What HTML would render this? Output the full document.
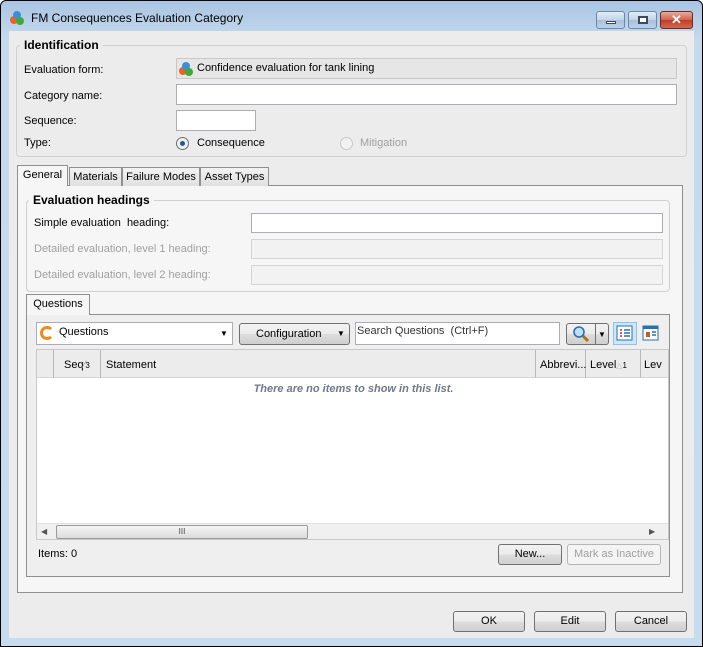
<!DOCTYPE html><html><head><style>
*{box-sizing:border-box;margin:0;padding:0}
body{width:703px;height:647px;overflow:hidden;background:#fff;font-family:"Liberation Sans",sans-serif;font-size:11px;color:#000;position:relative}
.a{position:absolute}
.t{position:absolute;white-space:nowrap;line-height:13px}
.inp{position:absolute;background:#fff;border:1px solid #abadb3}
.dis{background:#f2f2f2;border-color:#d4d4d4}
.btn{position:absolute;border:1px solid #707070;border-radius:3px;background:linear-gradient(#f2f2f2,#ebebeb 50%,#dddddd 51%,#cfcfcf);text-align:center;line-height:19px}
.grp{position:absolute;border:1px solid #d0d0d0;border-radius:4px}
.gt{position:absolute;font-weight:bold;background:#ececec;padding:0 4px;font-size:12px;line-height:14px}
.gray{color:#a0a0a0}
.tab{position:absolute;border:1px solid #8e8f8f;border-bottom:none;background:linear-gradient(#f3f3f3,#e0e0e0);text-align:center;line-height:18px}
</style></head><body>
<div class="a" style="left:0;top:0;width:703px;height:647px;border:1px solid #000;background:linear-gradient(#a9c5e3,#c6daee 40px,#c8dcf0);border-radius:6px 6px 0 0"></div>
<!-- title -->
<svg class="a" style="left:9px;top:10px" width="16" height="16"><circle cx="5" cy="10" r="4" fill="#e8622a"/><circle cx="8" cy="5" r="4" fill="#3a8fd8"/><circle cx="11" cy="11" r="4" fill="#3cab3c"/></svg>
<div class="t" style="left:31px;top:12px;font-size:12px">FM Consequences Evaluation Category</div>
<div class="a" style="left:596px;top:11px;width:29px;height:18px;border:1px solid #6d87a8;border-radius:3px;background:linear-gradient(#e3ecf6,#c2d4ea 50%,#a9c0de 51%,#bcd1ea)"><div class="a" style="left:9px;top:9px;width:10px;height:3px;background:#fff;border:1px solid #3b4a5c"></div></div>
<div class="a" style="left:628px;top:11px;width:29px;height:18px;border:1px solid #6d87a8;border-radius:3px;background:linear-gradient(#e3ecf6,#c2d4ea 50%,#a9c0de 51%,#bcd1ea)"><div class="a" style="left:9px;top:4px;width:10px;height:8px;background:#fff;border:2px solid #3b4a5c"></div></div>
<div class="a" style="left:660px;top:11px;width:33px;height:18px;border:1px solid #6b2a22;border-radius:3px;background:linear-gradient(#e9a99b,#d0624c 50%,#bf3c24 51%,#d06a50);color:#fff;font-weight:bold;font-size:13px;text-align:center;line-height:16px">✕</div>
<!-- client -->
<div class="a" style="left:9px;top:31px;width:685px;height:607px;background:#ececec"></div>
<div class="grp" style="left:16px;top:45px;width:671px;height:112px"></div>
<div class="gt" style="left:20px;top:38px">Identification</div>
<div class="t" style="left:24px;top:64px">Evaluation form:</div>
<div class="t" style="left:24px;top:90px">Category name:</div>
<div class="t" style="left:24px;top:115px">Sequence:</div>
<div class="t" style="left:24px;top:137px">Type:</div>
<div class="inp" style="left:176px;top:58px;width:501px;height:21px;background:#e6e6e6;border-color:#c8c8c8"></div>
<svg class="a" style="left:178px;top:61px" width="16" height="16"><circle cx="5" cy="10" r="4" fill="#e8622a"/><circle cx="8" cy="5" r="4" fill="#3a8fd8"/><circle cx="11" cy="11" r="4" fill="#3cab3c"/></svg>
<div class="t" style="left:197px;top:62px">Confidence evaluation for tank lining</div>
<div class="inp" style="left:176px;top:84px;width:501px;height:21px"></div>
<div class="inp" style="left:176px;top:110px;width:80px;height:21px"></div>
<div class="a" style="left:176px;top:137px;width:13px;height:13px;border-radius:50%;border:1px solid #6e6e6e;background:#f0f0f0"><div class="a" style="left:3px;top:3px;width:5px;height:5px;border-radius:50%;background:#1c5b91"></div></div>
<div class="t" style="left:197px;top:137px">Consequence</div>
<div class="a" style="left:340px;top:137px;width:13px;height:13px;border-radius:50%;border:1px solid #c8c8c8;background:#f2f2f2"></div>
<div class="t gray" style="left:360px;top:137px">Mitigation</div>
<!-- tabs -->
<div class="a" style="left:17px;top:185px;width:666px;height:408px;border:1px solid #8e8f8f;background:#f6f6f6"></div>
<div class="tab" style="left:69px;top:167px;width:53px;height:19px">Materials</div>
<div class="tab" style="left:122px;top:167px;width:78px;height:19px">Failure Modes</div>
<div class="tab" style="left:200px;top:167px;width:69px;height:19px">Asset Types</div>
<div class="tab" style="left:17px;top:165px;width:51px;height:21px;background:#f6f6f6;line-height:19px">General</div>
<div class="grp" style="left:26px;top:200px;width:644px;height:92px"></div>
<div class="gt" style="left:29px;top:193px;background:#f6f6f6">Evaluation headings</div>
<div class="t" style="left:34px;top:217px">Simple evaluation&nbsp; heading:</div>
<div class="t gray" style="left:34px;top:243px">Detailed evaluation, level 1 heading:</div>
<div class="t gray" style="left:34px;top:269px">Detailed evaluation, level 2 heading:</div>
<div class="inp" style="left:251px;top:213px;width:412px;height:20px"></div>
<div class="inp dis" style="left:251px;top:239px;width:412px;height:20px"></div>
<div class="inp dis" style="left:251px;top:265px;width:412px;height:20px"></div>
<!-- questions -->
<div class="a" style="left:26px;top:314px;width:644px;height:263px;border:1px solid #8e8f8f;background:#efefef"></div>
<div class="tab" style="left:26px;top:294px;width:64px;height:21px;background:#f6f6f6;line-height:19px">Questions</div>
<div class="inp" style="left:36px;top:322px;width:197px;height:23px"></div>
<div class="a" style="left:40px;top:326px;width:14px;height:14px;border-radius:50%;border:3px solid #f08a1c;border-right-color:transparent"></div>
<div class="t" style="left:59px;top:326px">Questions</div>
<div class="t" style="left:220px;top:327px;font-size:8px">▼</div>
<div class="btn" style="left:239px;top:323px;width:111px;height:22px;text-align:left;padding-left:16px;line-height:20px">Configuration<span style="position:absolute;left:97px;font-size:8px">▼</span></div>
<div class="inp" style="left:355px;top:322px;width:205px;height:23px"></div>
<div class="t" style="left:357px;top:325px;color:#333">Search Questions&nbsp; (Ctrl+F)</div>
<div class="btn" style="left:566px;top:323px;width:43px;height:22px"></div>
<svg class="a" style="left:572px;top:325px" width="18" height="18"><circle cx="7" cy="7" r="5" fill="#bfe0f8" stroke="#2a6fb0" stroke-width="1.6"/><path d="M11 11l5 5" stroke="#b0701a" stroke-width="3"/></svg>
<div class="a" style="left:595px;top:324px;width:1px;height:20px;background:#707070"></div>
<div class="t" style="left:598px;top:328px;font-size:8px">▼</div>
<div class="a" style="left:613px;top:322px;width:24px;height:23px;background:#cde6fb;border:1px solid #8cc3ee"></div>
<svg class="a" style="left:616px;top:325px" width="17" height="16"><rect x="1" y="1" width="15" height="14" fill="#fff" stroke="#2a6fb0"/><path d="M4 5h2M4 8h2M4 11h2" stroke="#c03020" stroke-width="1.5"/><path d="M8 5h6M8 8h6M8 11h6" stroke="#2a6fb0" stroke-width="1.5"/></svg>
<svg class="a" style="left:642px;top:325px" width="17" height="16"><rect x="1" y="1" width="15" height="14" fill="#fff" stroke="#2a6fb0"/><rect x="1" y="1" width="15" height="3" fill="#2a6fb0"/><rect x="4" y="7" width="4" height="5" fill="#c06020"/><path d="M10 7h4M10 10h4" stroke="#2a6fb0" stroke-width="1.5"/></svg>
<!-- grid -->
<div class="a" style="left:36px;top:349px;width:633px;height:191px;border:1px solid #c8c8c8;background:#fff;overflow:hidden">
<div class="a" style="left:0;top:0;width:633px;height:28px;background:#ececec;border-bottom:1px solid #d5d5d5"></div>
<div class="a" style="left:16px;top:0;width:1px;height:28px;background:#b8b8b8"></div>
<div class="a" style="left:63px;top:0;width:1px;height:28px;background:#b8b8b8"></div>
<div class="a" style="left:498px;top:0;width:1px;height:28px;background:#b8b8b8"></div>
<div class="a" style="left:548px;top:0;width:1px;height:28px;background:#b8b8b8"></div>
<div class="a" style="left:603px;top:0;width:1px;height:28px;background:#b8b8b8"></div>
<div class="t" style="left:27px;top:9px">Seq<span style="color:#999">⁄</span><span style="font-size:8px">3</span></div>
<div class="t" style="left:69px;top:9px">Statement</div>
<div class="t" style="left:503px;top:9px">Abbrevi...</div>
<div class="t" style="left:553px;top:9px">Level<span style="color:#bbb;font-size:8px">△</span><span style="font-size:8px">1</span></div>
<div class="t" style="left:607px;top:9px">Lev</div>
<div class="t" style="left:0;width:633px;top:33px;text-align:center;font-style:italic;font-weight:bold;color:#6d7a8a">There are no items to show in this list.</div>
<div class="a" style="left:0;top:173px;width:633px;height:17px;background:#f0f0f0;border-top:1px solid #e0e0e0"></div>
<div class="t" style="left:4px;top:175px;font-size:8px;color:#555">◀</div>
<div class="t" style="left:612px;top:175px;font-size:8px;color:#555">▶</div>
<div class="a" style="left:19px;top:175px;width:252px;height:14px;border:1px solid #999;border-radius:2px;background:linear-gradient(#f4f4f4,#dcdcdc);text-align:center;font-size:8px;line-height:12px;color:#444">III</div>
</div>
<div class="t" style="left:38px;top:548px">Items: 0</div>
<div class="btn" style="left:498px;top:544px;width:64px;height:21px">New...</div>
<div class="btn" style="left:567px;top:544px;width:94px;height:21px;border-color:#b5b5b5;background:#f4f4f4;color:#a0a0a0">Mark as Inactive</div>
<div class="btn" style="left:453px;top:611px;width:72px;height:21px">OK</div>
<div class="btn" style="left:534px;top:611px;width:72px;height:21px">Edit</div>
<div class="btn" style="left:615px;top:611px;width:72px;height:21px">Cancel</div>
</body></html>
